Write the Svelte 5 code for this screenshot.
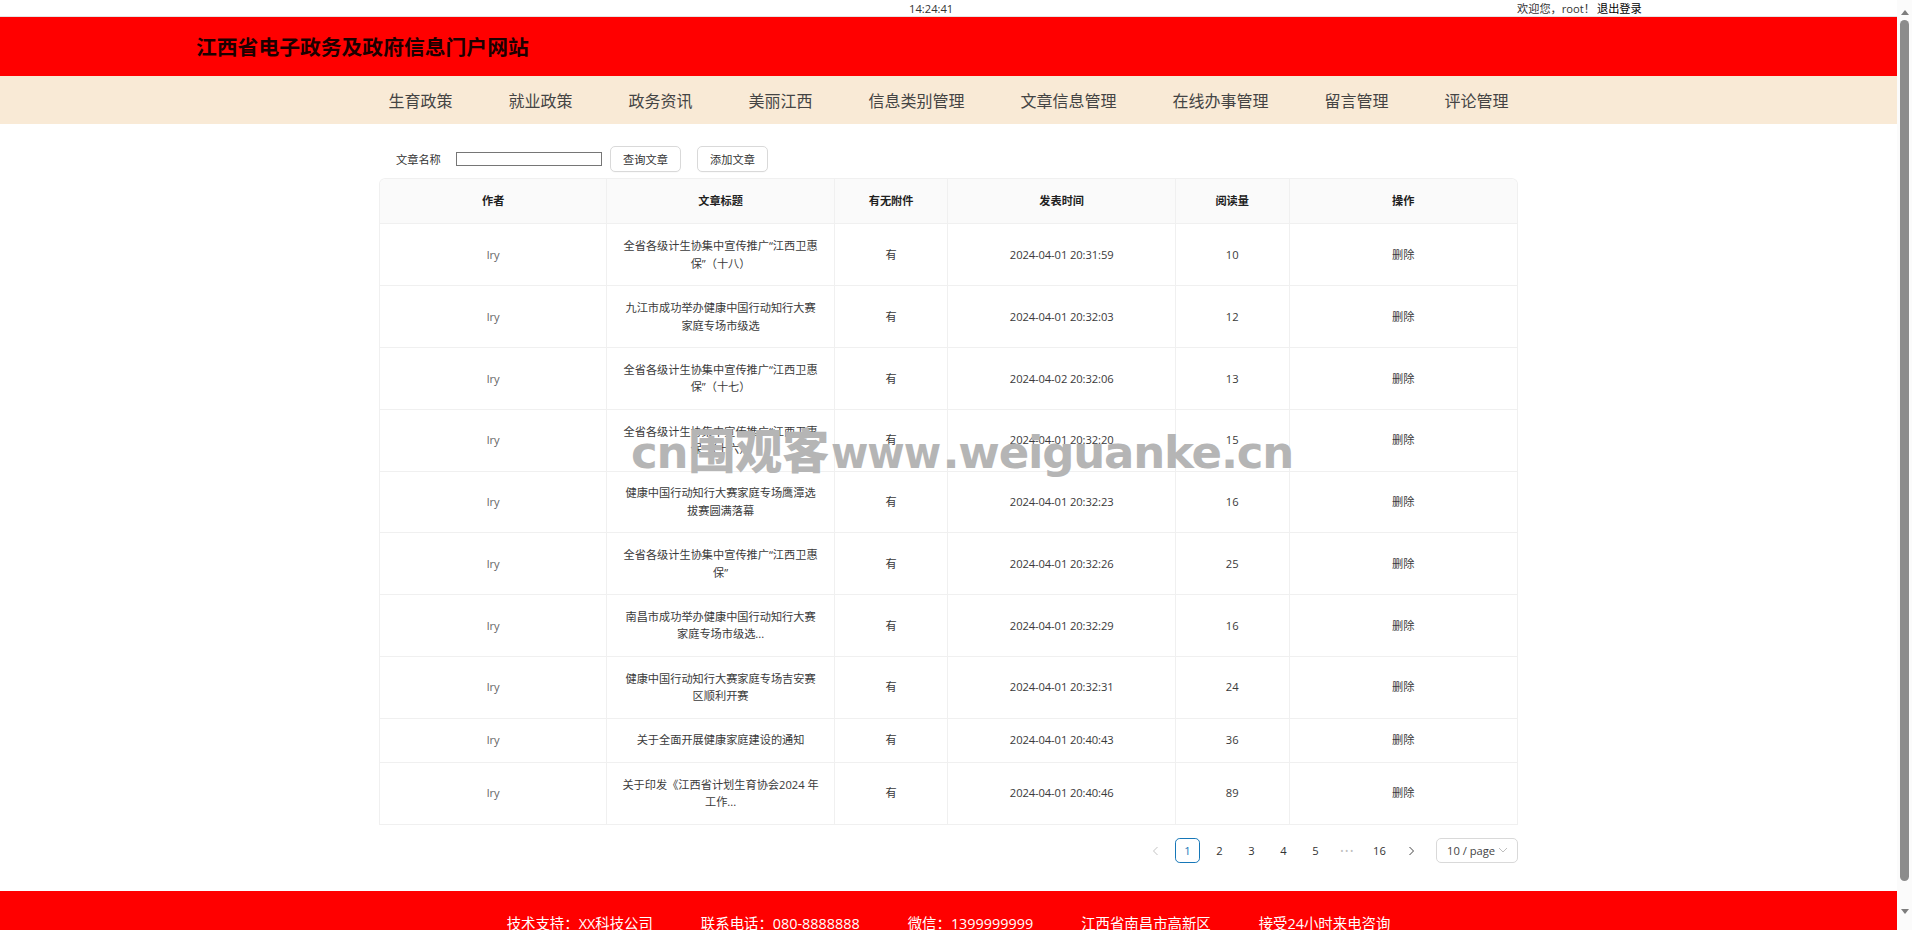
<script>
  const navItems = ['生育政策','就业政策','政务资讯','美丽江西','信息类别管理','文章信息管理','在线办事管理','留言管理','评论管理'];
  const base = '全省各级计生协集中宣传推广“江西卫惠保”';
  const rows = [
    [base + '（十八）', '2024-04-01 20:31:59', 10],
    ['九江市成功举办健康中国行动知行大赛家庭专场市级选', '2024-04-01 20:32:03', 12],
    [base + '（十七）', '2024-04-02 20:32:06', 13],
    [base + '（十六）', '2024-04-01 20:32:20', 15],
    ['健康中国行动知行大赛家庭专场鹰潭选拔赛圆满落幕', '2024-04-01 20:32:23', 16],
    [base, '2024-04-01 20:32:26', 25],
    ['南昌市成功举办健康中国行动知行大赛家庭专场市级选...', '2024-04-01 20:32:29', 16],
    ['健康中国行动知行大赛家庭专场吉安赛区顺利开赛', '2024-04-01 20:32:31', 24],
    ['关于全面开展健康家庭建设的通知', '2024-04-01 20:40:43', 36],
    ['关于印发《江西省计划生育协会2024 年工作...', '2024-04-01 20:40:46', 89]
  ];
  const footerItems = ['技术支持：XX科技公司','联系电话：080-8888888','微信：1399999999','江西省南昌市高新区','接受24小时来电咨询'];
  const pages = ['1','2','3','4','5','•••','16'];
</script>

<div class="frame">
  <div class="page">
    <div class="topbar">
      <span class="clock">14:24:41</span>
      <span class="user">欢迎您，root！<a class="logout" href="#top">退出登录</a></span>
    </div>
    <header class="brand"><h1>江西省电子政务及政府信息门户网站</h1></header>
    <nav class="nav">
      {#each navItems as item}<a href="#top">{item}</a>{/each}
    </nav>
    <main class="main">
      <div class="toolbar">
        <label for="kw">文章名称</label>
        <input id="kw" type="text" />
        <button class="search">查询文章</button>
        <button class="add">添加文章</button>
      </div>
      <div class="table-wrap">
        <table>
          <thead>
            <tr>
              <th class="w2">作者</th><th class="w2">文章标题</th><th class="w1">有无附件</th>
              <th class="w2">发表时间</th><th class="w1">阅读量</th><th class="w2 last">操作</th>
            </tr>
          </thead>
          <tbody>
            {#each rows as r}
              <tr>
                <td class="author">lry</td>
                <td>{r[0]}</td>
                <td>有</td>
                <td class="time">{r[1]}</td>
                <td>{r[2]}</td>
                <td class="last">删除</td>
              </tr>
            {/each}
          </tbody>
        </table>
      </div>
      <div class="pager">
        <span class="pg arrow disabled">
          <svg width="9" height="10" viewBox="0 0 9 10"><path d="M6.5 1 2.5 5l4 4" fill="none" stroke="currentColor" stroke-width="1"/></svg>
        </span>
        {#each pages as p, i}
          <span class="pg" class:active={i === 0} class:dots={p === '•••'}>{p}</span>
        {/each}
        <span class="pg arrow">
          <svg width="9" height="10" viewBox="0 0 9 10"><path d="M2.5 1l4 4-4 4" fill="none" stroke="currentColor" stroke-width="1"/></svg>
        </span>
        <span class="select">10 / page
          <svg width="10" height="7" viewBox="0 0 10 7"><path d="M1 1l4 4 4-4" fill="none" stroke="#bfbfbf" stroke-width="1"/></svg>
        </span>
      </div>
    </main>
    <footer class="footer">
      {#each footerItems as f}<span>{f}</span>{/each}
    </footer>
  </div>
  <aside class="scrollbar" aria-hidden="true">
    <i class="up"></i>
    <b class="thumb"></b>
    <i class="down"></i>
  </aside>
  <div class="watermark">cn<span class="wm-cjk">围观客</span><span class="wm-www">www</span>.weiguanke.cn</div>
</div>

<style>
  :global(body) { margin: 0; background: #fff; overflow: hidden; }
  .frame {
    position: relative;
    display: flex;
    height: 930px;
    overflow: hidden;
    font-family: "Open Sans", "Noto Sans CJK SC", sans-serif;
    font-size: 11.2px;
    color: #333;
    text-spacing-trim: space-all;
  }
  .page { flex: 1; min-width: 0; display: flex; flex-direction: column; }

  .topbar { position: relative; height: 16px; border-bottom: 1px solid #e4e4e4; line-height: 18px; font-size: 11.2px; color: #333; }
  .clock { position: absolute; left: 909px; top: 0; }
  .user { position: absolute; left: 1517px; top: 0; white-space: nowrap; }
  .logout { margin-left: 2px; color: #000; text-decoration: none; }

  .brand { height: 59px; background: #f00; display: flex; align-items: center; padding: 2px 0 0 196px; box-sizing: border-box; }
  .brand h1 { margin: 0; font-size: 20.8px; font-weight: 700; color: #1c0000; line-height: 1; }

  .nav { height: 48px; background: #f9ead6; display: flex; justify-content: center; align-items: center; gap: 56px; }
  .nav a { font-size: 16px; color: #444; text-decoration: none; white-space: nowrap; }

  .main { width: 1139px; margin: 22px auto 0; flex: 1; }
  .toolbar { display: flex; align-items: center; height: 26px; margin-bottom: 6px; padding-left: 17px; }
  .toolbar label { width: 60px; color: #333; }
  .toolbar input { width: 146px; height: 14px; box-sizing: border-box; border: 1px solid #767676; padding: 0; margin: 0 8px 0 0; background: #fff; }
  .toolbar button {
    width: 71px; height: 26px; box-sizing: border-box;
    border: 1px solid #d9d9d9; border-radius: 5px; background: #fff;
    font: inherit; color: #333; padding: 0; box-shadow: 0 1px 0 rgba(0,0,0,.02);
  }
  .toolbar .search { margin-right: 16px; }

  .table-wrap { border: 1px solid #f0f0f0; border-bottom: 0; border-radius: 6.4px 6.4px 0 0; overflow: hidden; }
  table { width: 100%; table-layout: fixed; border-collapse: separate; border-spacing: 0; }
  th, td {
    box-sizing: border-box;
    padding: 12.8px; line-height: 17.6px; text-align: center;
    border-bottom: 1px solid #f0f0f0; border-right: 1px solid #f0f0f0;
    font-size: 11.2px; color: #3a3a3a; word-break: break-all;
  }
  th { background: #fafafa; font-weight: 700; color: #1f1f1f; padding-top: 13.4px; padding-bottom: 13.4px; }
  .w1 { width: 10%; }
  .w2 { width: 20%; }
  .last { border-right: 0; }
  .author { color: #666; }
  .time { letter-spacing: -0.1px; }

  .pager { display: flex; justify-content: flex-end; align-items: center; margin-top: 13px; height: 26px; }
  .pg {
    width: 25.6px; height: 25.6px; margin-right: 6.4px; box-sizing: border-box;
    display: flex; align-items: center; justify-content: center;
    border-radius: 4.8px; color: #333; line-height: 1;
  }
  .pg.active { border: 1px solid #1677b8; color: #1677b8; }
  .pg.dots { color: #bfbfbf; font-size: 9px; letter-spacing: 1.5px; }
  .arrow { color: #444; }
  .arrow.disabled { color: #c4c4c4; }
  .select {
    width: 82px; height: 25.6px; box-sizing: border-box; margin-left: 5.4px;
    display: flex; align-items: center; justify-content: space-between;
    padding: 0 9px 0 10px; border: 1px solid #d9d9d9; border-radius: 5px; color: #444; white-space: nowrap;
  }

  .footer { flex: none; height: 39px; background: #f00; display: flex; justify-content: center; gap: 48px; padding-top: 23px; box-sizing: border-box; }
  .footer span { font-size: 14.4px; line-height: 20px; color: #fff; white-space: nowrap; }

  .scrollbar { position: relative; width: 15px; flex: none; background: #fbfbfb; display: flex; flex-direction: column; align-items: center; }
  .thumb { display: block; width: 9px; margin-top: 5px; height: 861px; border-radius: 5px; background: #8c8c8c; }
  .up, .down { display: block; width: 0; height: 0; border-left: 4px solid transparent; border-right: 4px solid transparent; }
  .up { margin-top: 10px; margin-bottom: 0; border-bottom: 5px solid #7d7d7d; height: 0; }
  .down { margin-top: 28px; border-top: 5px solid #7d7d7d; }

  .watermark {
    position: absolute; left: 631px; top: 424px; width: 665px;
    font-family: "DejaVu Sans", "Noto Sans CJK SC", sans-serif;
    font-weight: 700; font-size: 45px; line-height: 56px;
    color: #b5b5b5; white-space: nowrap; letter-spacing: -1.2px; pointer-events: none;
  }
  .wm-cjk { font-size: 47px; font-weight: 900; letter-spacing: 0; margin-left: 1px; }
  .wm-www { display: inline-block; transform: scaleX(0.9); transform-origin: left center; margin: 0 -10px 0 2px; }
</style>
